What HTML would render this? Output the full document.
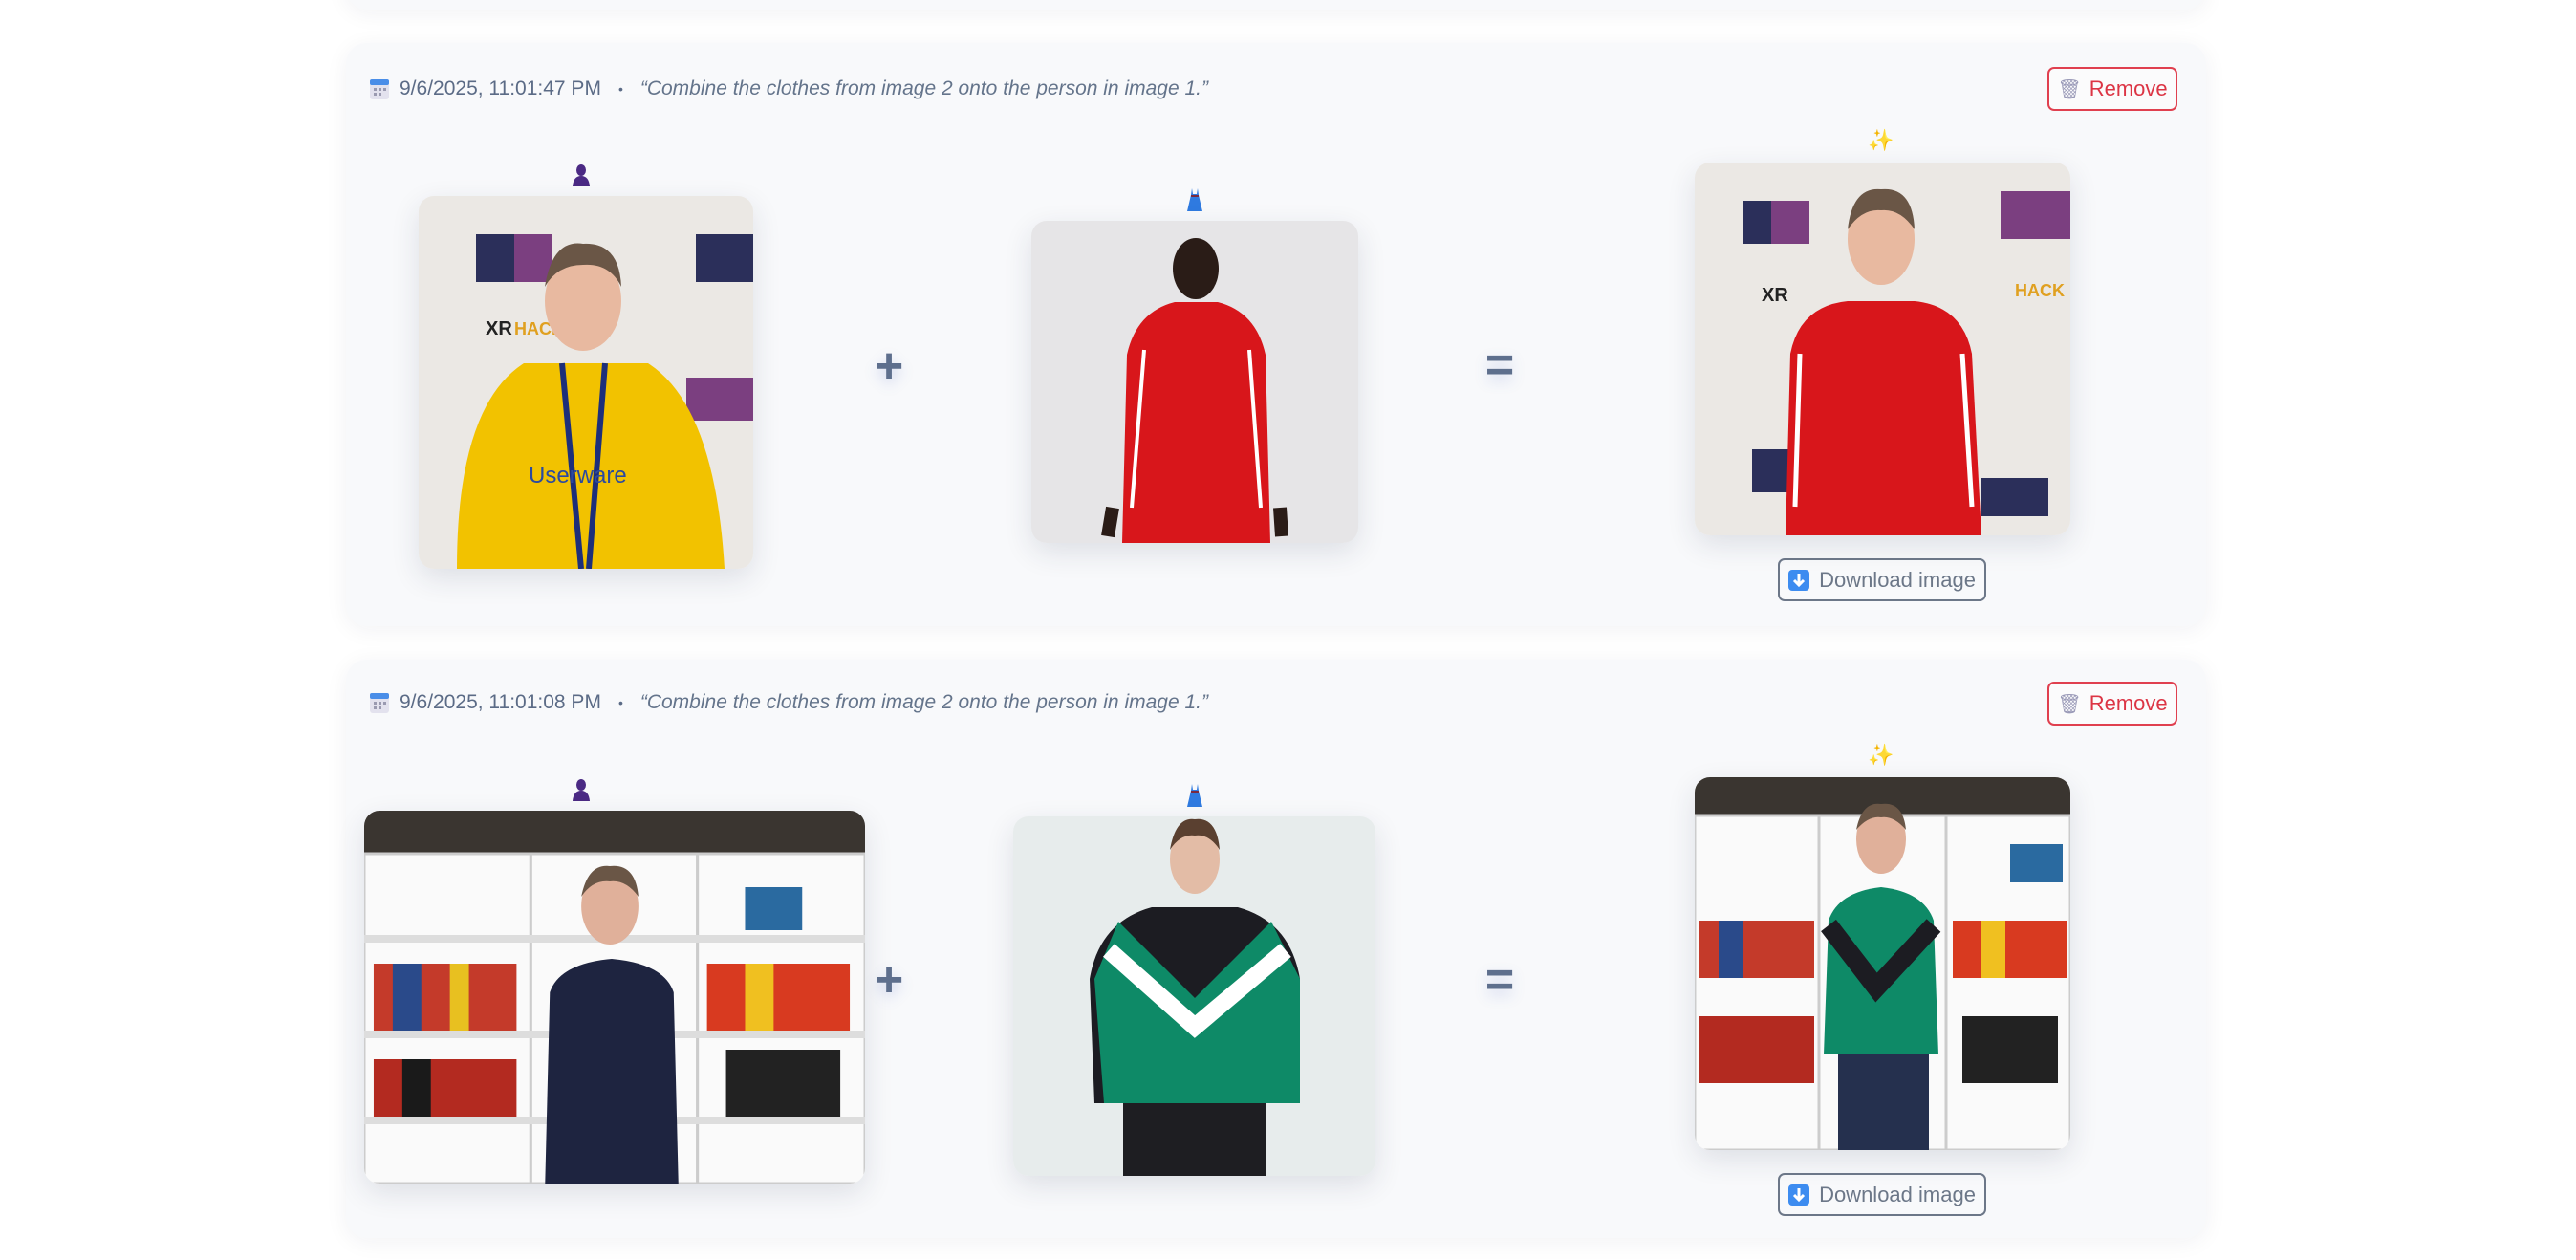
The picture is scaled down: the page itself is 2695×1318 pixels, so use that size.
<!DOCTYPE html>
<html><head><meta charset="utf-8"><style>
*{box-sizing:border-box;margin:0;padding:0}
body{width:2695px;height:1318px;background:#fff;position:relative;overflow:hidden;font-family:"Liberation Sans",sans-serif}
.card{position:absolute;left:362px;width:1946px;background:#f8f9fb;border-radius:22px;box-shadow:0 4px 24px rgba(30,40,70,.06)}
.abs{position:absolute}
.meta{position:absolute;left:386px;font-size:21px;color:#5b6b86;white-space:nowrap;display:flex;align-items:center}
.meta i{font-style:italic;color:#64748b}
.dot{margin:0 18px;font-size:14px}
.rm{position:absolute;left:2142px;width:136px;height:46px;border:2px solid #e0404f;border-radius:7px;color:#dc3545;font-size:22px;display:flex;align-items:center;justify-content:center;gap:8px;background:#fbfbfc}
.dl{position:absolute;left:1860px;width:218px;height:45px;border:2px solid #6c7788;border-radius:7px;color:#6c7788;font-size:22px;display:flex;align-items:center;justify-content:center;gap:10px}
.img{position:absolute;border-radius:16px;overflow:hidden;box-shadow:0 10px 30px rgba(30,40,70,.12)}
.img svg{width:100%;height:100%;display:block}
.op{position:absolute;color:#5e6f8d;font-size:52px;font-weight:bold;transform:translate(-50%,-50%);text-shadow:0 6px 14px rgba(90,110,200,.25)}
.ico{position:absolute;transform:translateX(-50%)}
</style></head><body>
<div class="card" style="top:-40px;height:50px"></div>

<!-- card 1 -->
<div class="card" style="top:45px;height:610px"></div>
<div class="meta" style="top:81px"><svg width="22" height="24" viewBox="0 0 22 24"><rect x="1" y="2" width="20" height="21" rx="3" fill="#e3e2ee"/><rect x="1" y="2" width="20" height="6" rx="2" fill="#4a8ee8"/><g fill="#9a9ab0"><rect x="5" y="11" width="3" height="3"/><rect x="10" y="11" width="3" height="3"/><rect x="15" y="11" width="3" height="3"/><rect x="5" y="16" width="3" height="3"/><rect x="10" y="16" width="3" height="3"/></g></svg><span style="margin-left:10px">9/6/2025, 11:01:47 PM</span><span class="dot">•</span><i>“Combine the clothes from image 2 onto the person in image 1.”</i></div>
<div class="rm" style="top:70px"><span style="font-size:20px;color:#9a9ab8">🗑</span>Remove</div>

<svg class="ico" style="left:608px;top:171px" width="22" height="24" viewBox="0 0 22 24"><ellipse cx="11" cy="7" rx="5" ry="6" fill="#4b2a84"/><path d="M2 24 Q3 13 11 13 Q19 13 20 24Z" fill="#4b2a84"/></svg>
<div class="img" style="left:438px;top:205px;width:350px;height:390px"><svg viewBox="0 0 350 390" preserveAspectRatio="none"><rect width="350" height="390" fill="#ebe8e4"/><rect x="60" y="40" width="70" height="50" fill="#2b2f5a"/><rect x="100" y="40" width="40" height="50" fill="#7b3f80"/><rect x="290" y="40" width="60" height="50" fill="#2b2f5a"/><rect x="280" y="190" width="70" height="45" fill="#7b3f80"/><text x="70" y="145" font-size="20" font-weight="bold" fill="#222">XR</text><text x="100" y="145" font-size="18" font-weight="bold" fill="#e0a020">HACK</text><path d="M40 390 Q40 220 110 175 L240 175 Q310 220 320 390Z" fill="#f2c200"/><ellipse cx="172" cy="110" rx="40" ry="52" fill="#e8b9a0"/><path d="M132 95 Q140 45 172 50 Q210 48 212 95 Q200 70 172 72 Q145 72 132 95Z" fill="#6a5646"/><path d="M150 175 L170 390 M195 175 L178 390" stroke="#1d2f7a" stroke-width="6"/><text x="115" y="300" font-size="24" fill="#2b4aa0">Userware</text></svg></div>

<div class="op" style="left:930px;top:383px">+</div>

<svg class="ico" style="left:1250px;top:197px" width="20" height="24" viewBox="0 0 20 24"><path d="M7 0 L8 6 L12 6 L13 0 L14 7 L18 24 L2 24 L6 7Z" fill="#2f7ae0"/><rect x="6" y="7" width="8" height="2" fill="#7a2a40"/></svg>
<div class="img" style="left:1079px;top:231px;width:342px;height:337px"><svg viewBox="0 0 342 337" preserveAspectRatio="none"><rect width="342" height="337" fill="#e6e5e7"/><path d="M95 337 L100 140 Q110 95 150 85 L195 85 Q235 95 245 140 L250 337Z" fill="#d8161b"/><path d="M118 135 L105 300 M228 135 L240 300" stroke="#fff" stroke-width="4"/><ellipse cx="172" cy="50" rx="24" ry="32" fill="#2a1c17"/><path d="M85 300 L80 330 M260 300 L262 330" stroke="#2a1c17" stroke-width="14"/></svg></div>

<div class="op" style="left:1569px;top:382px">=</div>

<div class="ico" style="left:1968px;top:134px;font-size:22px;color:#f5a623">✨</div>
<div class="img" style="left:1773px;top:170px;width:393px;height:390px"><svg viewBox="0 0 393 390" preserveAspectRatio="none"><rect width="393" height="390" fill="#ebe8e4"/><rect x="50" y="40" width="60" height="45" fill="#2b2f5a"/><rect x="80" y="40" width="40" height="45" fill="#7b3f80"/><rect x="320" y="30" width="73" height="50" fill="#7b3f80"/><rect x="60" y="300" width="60" height="45" fill="#2b2f5a"/><rect x="300" y="330" width="70" height="40" fill="#2b2f5a"/><text x="70" y="145" font-size="20" font-weight="bold" fill="#222">XR</text><text x="335" y="140" font-size="18" font-weight="bold" fill="#e0a020">HACK</text><path d="M95 390 L100 200 Q110 150 160 145 L230 145 Q280 150 290 200 L300 390Z" fill="#d8161b"/><path d="M110 200 L105 360 M280 200 L290 360" stroke="#fff" stroke-width="5"/><ellipse cx="195" cy="80" rx="35" ry="48" fill="#e8b9a0"/><path d="M160 70 Q165 25 195 28 Q228 25 230 70 Q215 48 195 50 Q175 48 160 70Z" fill="#6a5646"/></svg></div>
<div class="dl" style="top:584px"><svg width="22" height="22" viewBox="0 0 22 22"><rect width="22" height="22" rx="4" fill="#3d8cf0"/><path d="M11 4 V15 M6 11 L11 16 L16 11" stroke="#fff" stroke-width="3" fill="none"/></svg>Download image</div>

<!-- card 2 -->
<div class="card" style="top:690px;height:605px"></div>
<div class="meta" style="top:723px"><svg width="22" height="24" viewBox="0 0 22 24"><rect x="1" y="2" width="20" height="21" rx="3" fill="#e3e2ee"/><rect x="1" y="2" width="20" height="6" rx="2" fill="#4a8ee8"/><g fill="#9a9ab0"><rect x="5" y="11" width="3" height="3"/><rect x="10" y="11" width="3" height="3"/><rect x="15" y="11" width="3" height="3"/><rect x="5" y="16" width="3" height="3"/><rect x="10" y="16" width="3" height="3"/></g></svg><span style="margin-left:10px">9/6/2025, 11:01:08 PM</span><span class="dot">•</span><i>“Combine the clothes from image 2 onto the person in image 1.”</i></div>
<div class="rm" style="top:713px"><span style="font-size:20px;color:#9a9ab8">🗑</span>Remove</div>

<svg class="ico" style="left:608px;top:814px" width="22" height="24" viewBox="0 0 22 24"><ellipse cx="11" cy="7" rx="5" ry="6" fill="#4b2a84"/><path d="M2 24 Q3 13 11 13 Q19 13 20 24Z" fill="#4b2a84"/></svg>
<div class="img" style="left:381px;top:848px;width:524px;height:390px"><svg viewBox="0 0 526 390" preserveAspectRatio="none"><rect width="526" height="390" fill="#f0efec"/><rect width="526" height="45" fill="#3a3530"/><g fill="#fafafa" stroke="#ccc" stroke-width="3"><rect x="0" y="45" width="175" height="345"/><rect x="175" y="45" width="175" height="345"/><rect x="350" y="45" width="176" height="345"/></g><g fill="#ddd"><rect y="130" width="526" height="8"/><rect y="230" width="526" height="8"/><rect y="320" width="526" height="8"/></g><g><rect x="10" y="160" width="150" height="70" fill="#c43a2a"/><rect x="30" y="160" width="30" height="70" fill="#2a4a8a"/><rect x="90" y="160" width="20" height="70" fill="#e8c020"/><rect x="360" y="160" width="150" height="70" fill="#d83a20"/><rect x="400" y="160" width="30" height="70" fill="#f0c020"/><rect x="10" y="260" width="150" height="60" fill="#b32a20"/><rect x="40" y="260" width="30" height="60" fill="#1a1a1a"/><rect x="380" y="250" width="120" height="70" fill="#222"/><rect x="400" y="80" width="60" height="45" fill="#2a6aa0"/></g><path d="M190 390 L195 190 Q205 160 260 155 Q315 160 325 190 L330 390Z" fill="#1e2440"/><ellipse cx="258" cy="100" rx="30" ry="40" fill="#e0b09a"/><path d="M228 90 Q235 55 258 58 Q285 55 288 90 Q275 72 258 74 Q240 72 228 90Z" fill="#6a5646"/></svg></div>

<div class="op" style="left:930px;top:1025px">+</div>

<svg class="ico" style="left:1250px;top:820px" width="20" height="24" viewBox="0 0 20 24"><path d="M7 0 L8 6 L12 6 L13 0 L14 7 L18 24 L2 24 L6 7Z" fill="#2f7ae0"/><rect x="6" y="7" width="8" height="2" fill="#7a2a40"/></svg>
<div class="img" style="left:1060px;top:854px;width:379px;height:376px"><svg viewBox="0 0 379 376" preserveAspectRatio="none"><rect width="379" height="376" fill="#e7ecec"/><path d="M85 300 L80 170 Q90 110 145 95 L235 95 Q290 110 300 170 L295 300Z" fill="#1c1c22"/><path d="M110 110 L190 190 L270 110 L300 170 L300 300 L95 300 L85 170Z" fill="#0e8a67"/><path d="M100 140 L190 220 L285 140" stroke="#fff" stroke-width="18" fill="none"/><rect x="115" y="300" width="150" height="76" fill="#1e1e22"/><ellipse cx="190" cy="45" rx="26" ry="36" fill="#e3bca6"/><path d="M164 35 Q170 0 190 3 Q213 0 216 35 Q205 18 190 20 Q175 18 164 35Z" fill="#5a4030"/></svg></div>

<div class="op" style="left:1569px;top:1025px">=</div>

<div class="ico" style="left:1968px;top:777px;font-size:22px;color:#f5a623">✨</div>
<div class="img" style="left:1773px;top:813px;width:393px;height:390px"><svg viewBox="0 0 393 390" preserveAspectRatio="none"><rect width="393" height="390" fill="#f0efec"/><rect width="393" height="40" fill="#3a3530"/><g fill="#fafafa" stroke="#ccc" stroke-width="3"><rect x="0" y="40" width="130" height="350"/><rect x="130" y="40" width="133" height="350"/><rect x="263" y="40" width="130" height="350"/></g><g><rect x="5" y="150" width="120" height="60" fill="#c43a2a"/><rect x="25" y="150" width="25" height="60" fill="#2a4a8a"/><rect x="270" y="150" width="120" height="60" fill="#d83a20"/><rect x="300" y="150" width="25" height="60" fill="#f0c020"/><rect x="5" y="250" width="120" height="70" fill="#b32a20"/><rect x="280" y="250" width="100" height="70" fill="#222"/><rect x="330" y="70" width="55" height="40" fill="#2a6aa0"/></g><rect x="150" y="290" width="95" height="100" fill="#25304e"/><path d="M135 290 L140 150 Q150 120 195 115 Q240 120 250 150 L255 290Z" fill="#0e8a67"/><path d="M140 155 L190 220 L250 155" stroke="#1c1c22" stroke-width="20" fill="none"/><ellipse cx="195" cy="65" rx="26" ry="36" fill="#e0b09a"/><path d="M169 55 Q175 25 195 28 Q218 25 221 55 Q208 40 195 42 Q182 40 169 55Z" fill="#6a5646"/></svg></div>
<div class="dl" style="top:1227px"><svg width="22" height="22" viewBox="0 0 22 22"><rect width="22" height="22" rx="4" fill="#3d8cf0"/><path d="M11 4 V15 M6 11 L11 16 L16 11" stroke="#fff" stroke-width="3" fill="none"/></svg>Download image</div>
</body></html>
